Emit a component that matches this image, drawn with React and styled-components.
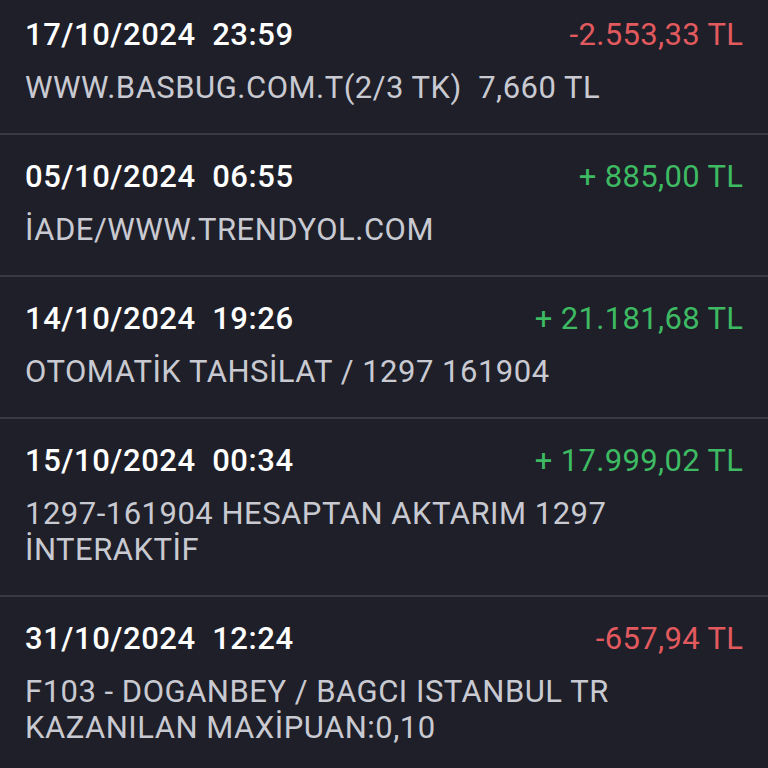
import React from 'react';
import styled, { createGlobalStyle } from 'styled-components';

const GlobalStyle = createGlobalStyle`
  html, body {
    margin: 0;
    padding: 0;
    background: #1e1f29;
    font-family: Roboto, "Noto Sans", sans-serif;
    overflow: hidden;
  }
`;

const transactions = [
  { date: '17/10/2024', time: '23:59', amount: '-2.553,33 TL', income: false, lines: ['WWW.BASBUG.COM.T(2/3 TK)  7,660 TL'] },
  { date: '05/10/2024', time: '06:55', amount: '+ 885,00 TL', income: true, lines: ['İADE/WWW.TRENDYOL.COM'] },
  { date: '14/10/2024', time: '19:26', amount: '+ 21.181,68 TL', income: true, lines: ['OTOMATİK TAHSİLAT / 1297 161904'] },
  { date: '15/10/2024', time: '00:34', amount: '+ 17.999,02 TL', income: true, lines: ['1297-161904 HESAPTAN AKTARIM 1297', 'İNTERAKTİF'] },
  { date: '31/10/2024', time: '12:24', amount: '-657,94 TL', income: false, lines: ['F103 - DOGANBEY / BAGCI ISTANBUL TR', 'KAZANILAN MAXİPUAN:0,10'] },
];

const Screen = styled.div`
  width: 768px;
  height: 768px;
  overflow: hidden;
  background: #1e1f29;
`;

const List = styled.div`
  margin-top: -7px;
  display: flex;
  flex-direction: column;
`;

const Row = styled.div`
  padding: 21px 25px 27px 25px;
  border-bottom: 2px solid #373945;
  display: flex;
  flex-direction: column;
  gap: 16px;
`;

const TopLine = styled.div`
  display: flex;
  justify-content: space-between;
  align-items: center;
  height: 40px;
`;

const DateText = styled.span`
  color: #ffffff;
  font-size: 31px;
  font-weight: 500;
  white-space: pre;
  letter-spacing: 0.55px;
`;

const Amount = styled.span`
  color: ${p => (p.$income ? '#3dba62' : '#e25a5e')};
  font-size: 31px;
  font-weight: 400;
  white-space: pre;
  letter-spacing: 0.35px;
  margin-right: -0.35px;
`;

const Desc = styled.div`
  color: #c9cad1;
  font-size: 31px;
  line-height: 36px;
  white-space: pre;
  letter-spacing: 0.5px;
`;

export default function App() {
  return (
    <Screen>
      <GlobalStyle />
      <List>
        {transactions.map((t, i) => (
          <Row key={i}>
            <TopLine>
              <DateText>{t.date + '  ' + t.time}</DateText>
              <Amount $income={t.income}>{t.amount}</Amount>
            </TopLine>
            <Desc>{t.lines.join('\n')}</Desc>
          </Row>
        ))}
      </List>
    </Screen>
  );
}
